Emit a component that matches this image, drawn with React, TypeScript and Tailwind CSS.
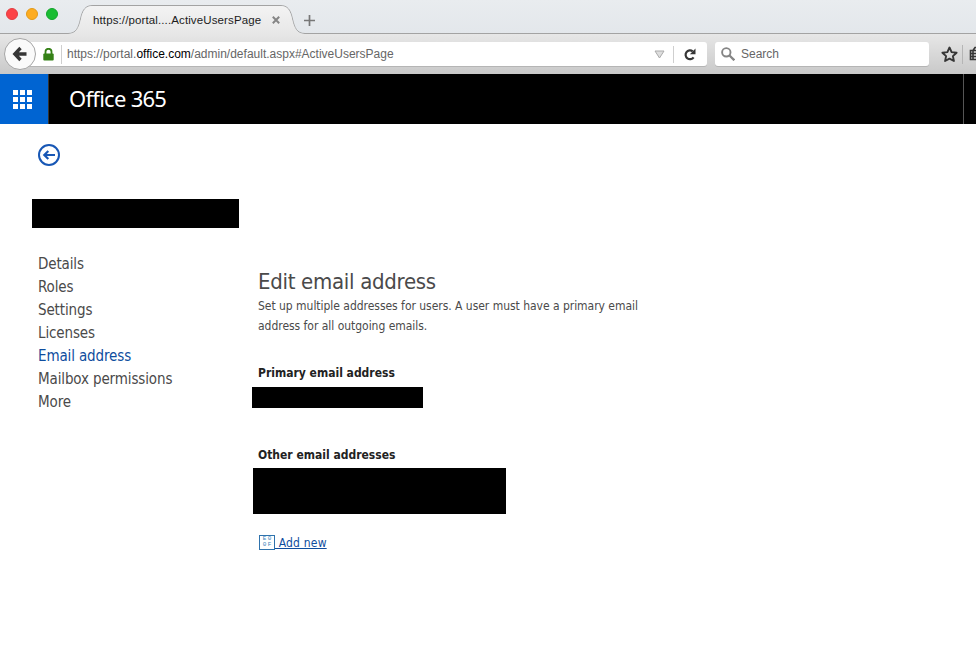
import React from "react";

const navItems = ["Details", "Roles", "Settings", "Licenses", "Email address", "Mailbox permissions", "More"];

function TabStrip() {
  return (
    <div className="relative flex h-[34px] items-start bg-gradient-to-b from-[#e9ecef] to-[#e3e7eb]">
      <svg className="absolute left-0 top-0" width="976" height="34" viewBox="0 0 976 34" fill="none">
        <defs>
          <linearGradient id="tab" x1="0" y1="0" x2="0" y2="1">
            <stop offset="0" stopColor="#f3f3f3" />
            <stop offset="1" stopColor="#e7e7e7" />
          </linearGradient>
        </defs>
        <path d="M0 33.5H68C76 33.5 78.500 28 80.500 19C82.500 10 85 5.500 93 5.500H280C288 5.500 290.500 10 292.500 19C294.500 28 297 33.500 305 33.500H976V35H0Z" fill="none" stroke="#a3a3a3" />
        <path d="M68 34C76 34 79 28 81 19C83 10 85.500 6 93 6H280C287.500 6 290 10 292 19C294 28 297 34 305 34Z" fill="url(#tab)" />
      </svg>
      <div className="relative ml-[6px] mt-[8px] flex gap-2">
        <span className="size-3 rounded-full border border-[#e33e42] bg-[#fc4347]" />
        <span className="size-3 rounded-full border border-[#e39a17] bg-[#fdac20]" />
        <span className="size-3 rounded-full border border-[#12a52b] bg-[#1abd33]" />
      </div>
      <div className="relative ml-[35px] mt-[13px] w-[168px] whitespace-nowrap text-[11.5px] leading-[15px] tracking-[0.12px] text-[#1c1c1c]">https://portal....ActiveUsersPage</div>
      <svg className="relative ml-[11px] mt-[16px]" width="8" height="8" viewBox="0 0 8 8" stroke="#858585" strokeWidth="2"><path d="M.8 .8 7.200 7.200M7.200 .8.8 7.200" /></svg>
      <svg className="relative ml-[24px] mt-[15px]" width="11" height="11" viewBox="0 0 11 11" stroke="#777" strokeWidth="1.700"><path d="M5.500 0V11M0 5.500H11" /></svg>
    </div>
  );
}

function Toolbar() {
  return (
    <div className="flex h-10 items-center bg-gradient-to-b from-[#e7e7e7] to-[#c9c9c9]">
      <div className="relative z-10 ml-1 flex size-8 items-center justify-center rounded-full border border-[#a5a5a5] bg-[#fafafa]">
        <svg width="16" height="16" viewBox="0 0 16 16" fill="none" stroke="#363636" strokeWidth="3.300"><path d="M8.500 2 2.800 8l5.700 6M3 8h11.500" /></svg>
      </div>
      <div className="-ml-4 flex h-6 w-[687px] items-center rounded-r-[3px] bg-white shadow-[0_1px_0_#b5b5b5] text-[12px]">
        <svg className="ml-[23px]" width="11" height="13" viewBox="0 0 11 13"><path d="M2.500 6V3.800a3 3 0 0 1 6 0V6" fill="none" stroke="#358117" strokeWidth="1.800" /><rect x=".3" y="5.500" width="10.400" height="7" rx="1" fill="#358117" /></svg>
        <span className="ml-[7px] h-[19px] w-px bg-[#cfcfcf]" />
        <span className="ml-[5px] w-[587px] whitespace-nowrap leading-4 text-[#666]">https://portal.<span className="text-black">office.com</span>/admin/default.aspx#ActiveUsersPage</span>
        <svg width="11" height="9" viewBox="0 0 11 9"><path d="M1 1H10L5.500 8Z" fill="#dedede" stroke="#aaa" /></svg>
        <span className="ml-[8px] h-[17px] w-px bg-[#cfcfcf]" />
        <svg className="ml-[10px]" width="12" height="13" viewBox="0 0 12 13"><path d="M9.600 9.300A4.400 4.400 0 1 1 8.700 3.300" fill="none" stroke="#363636" strokeWidth="2.200" /><path d="M11.500 .5V6.300H5.900Z" fill="#363636" /></svg>
      </div>
      <div className="ml-2 flex h-6 w-[214px] items-center rounded-[3px] bg-white text-[#666] shadow-[0_1px_0_#b5b5b5]">
        <svg className="ml-[6px]" width="14" height="14" viewBox="0 0 14 14" fill="none" stroke="#858585"><circle cx="5.300" cy="5.300" r="4.200" strokeWidth="1.900" /><path d="m8.500 8.500 4.800 4.800" strokeWidth="2.300" /></svg>
        <span className="ml-[6px] text-[12px]">Search</span>
      </div>
      <svg className="ml-[12px] shrink-0" width="17" height="17" viewBox="0 0 17 17" fill="none" stroke="#363636" strokeWidth="1.900" strokeLinejoin="round"><path d="m8.500 1.500 2.100 4.600 5 .6-3.700 3.400 1 4.900-4.400-2.400-4.400 2.400 1-4.900L1.400 6.700l5-.6Z" /></svg>
      <span className="ml-[4px] h-[19px] w-px bg-[#b5b5b5]" />
      <svg className="ml-[6px] shrink-0" width="7" height="16" viewBox="0 0 7 16" fill="none" stroke="#363636"><path d="M7 4.500H1.500V13.500H7M4 4.500V13.500M1.500 7.500H7M1.500 10.500H7M4 4.500 6 1.500H7" strokeWidth="1.600" /></svg>
    </div>
  );
}

function SuiteBar() {
  return (
    <div className="flex h-[50px] bg-black">
      <div className="flex w-[49px] items-center justify-center border-r border-[#333] bg-[#0064d2] pr-[3px]">
        <div className="grid grid-cols-3 gap-[2px]">
          {Array.from({ length: 9 }, (_, i) => <span key={i} className="h-[5px] w-[4.800px] bg-white" />)}
        </div>
      </div>
      <div className="ml-5 flex-1 whitespace-nowrap font-['Noto_Sans',sans-serif] text-[22px] leading-[48px] tracking-[-0.720px] text-white">Office 365</div>
      <div className="w-[13px] border-l border-[#555]" />
    </div>
  );
}

export default function App() {
  return (
    <div className="h-[654px] w-[976px] overflow-hidden bg-white font-['Liberation_Sans',Arial,sans-serif]">
      <TabStrip />
      <Toolbar />
      <SuiteBar />
      <main className="flex font-['DejaVu_Sans_Condensed','DejaVu_Sans',sans-serif] text-[#4a4a4a]">
        <aside className="w-[252px] pl-8 pt-5">
          <svg className="ml-[6px]" width="22" height="22" viewBox="0 0 22 22" fill="none" stroke="#1757b5"><circle cx="11" cy="11" r="10" strokeWidth="2" /><path d="M17 11H6.500M10.300 7 6.300 11l4 4" strokeWidth="2.200" /></svg>
          <div className="mt-[33px] h-[29px] w-[207px] bg-black" />
          <nav className="ml-[6px] mt-[25px] text-[15px] leading-[23px] tracking-[-0.130px]">
            {navItems.map((n) => <div key={n} className={n === "Email address" ? "text-[#0f4d9e]" : ""}>{n}</div>)}
          </nav>
        </aside>
        <section className="w-[420px] pt-[144px]">
          <h1 className="ml-[6px] text-[22px] leading-[28px] tracking-[-0.300px]">Edit email address</h1>
          <p className="ml-[6px] whitespace-nowrap text-[12px] leading-5 tracking-[-0.030px]">Set up multiple addresses for users. A user must have a primary email<br />address for all outgoing emails.</p>
          <h2 className="ml-[6px] mt-[27px] text-[12px] font-bold leading-5 text-[#222]">Primary email address</h2>
          <div className="mt-[4px] h-[21px] w-[171px] bg-black" />
          <h2 className="ml-[6px] mt-[37px] text-[12px] font-bold leading-5 text-[#222]">Other email addresses</h2>
          <div className="ml-px mt-[3px] h-[46px] w-[253px] bg-black" />
          <a className="ml-[7px] mt-[18px] flex items-center text-[12px] leading-5 text-[#0f4d9e]">
            <span className="grid h-[15px] w-4 grid-cols-2 grid-rows-2 place-items-center border border-[#2f73ad] px-[2px] font-['Liberation_Mono',monospace] text-[6px] leading-[6px] text-[#3a82b8]"><i className="not-italic">E</i><i className="not-italic">0</i><i className="not-italic">0</i><i className="not-italic">F</i></span>
            <span className="relative top-px whitespace-pre tracking-[0.200px] underline underline-offset-1"> Add new</span>
          </a>
        </section>
      </main>
    </div>
  );
}
